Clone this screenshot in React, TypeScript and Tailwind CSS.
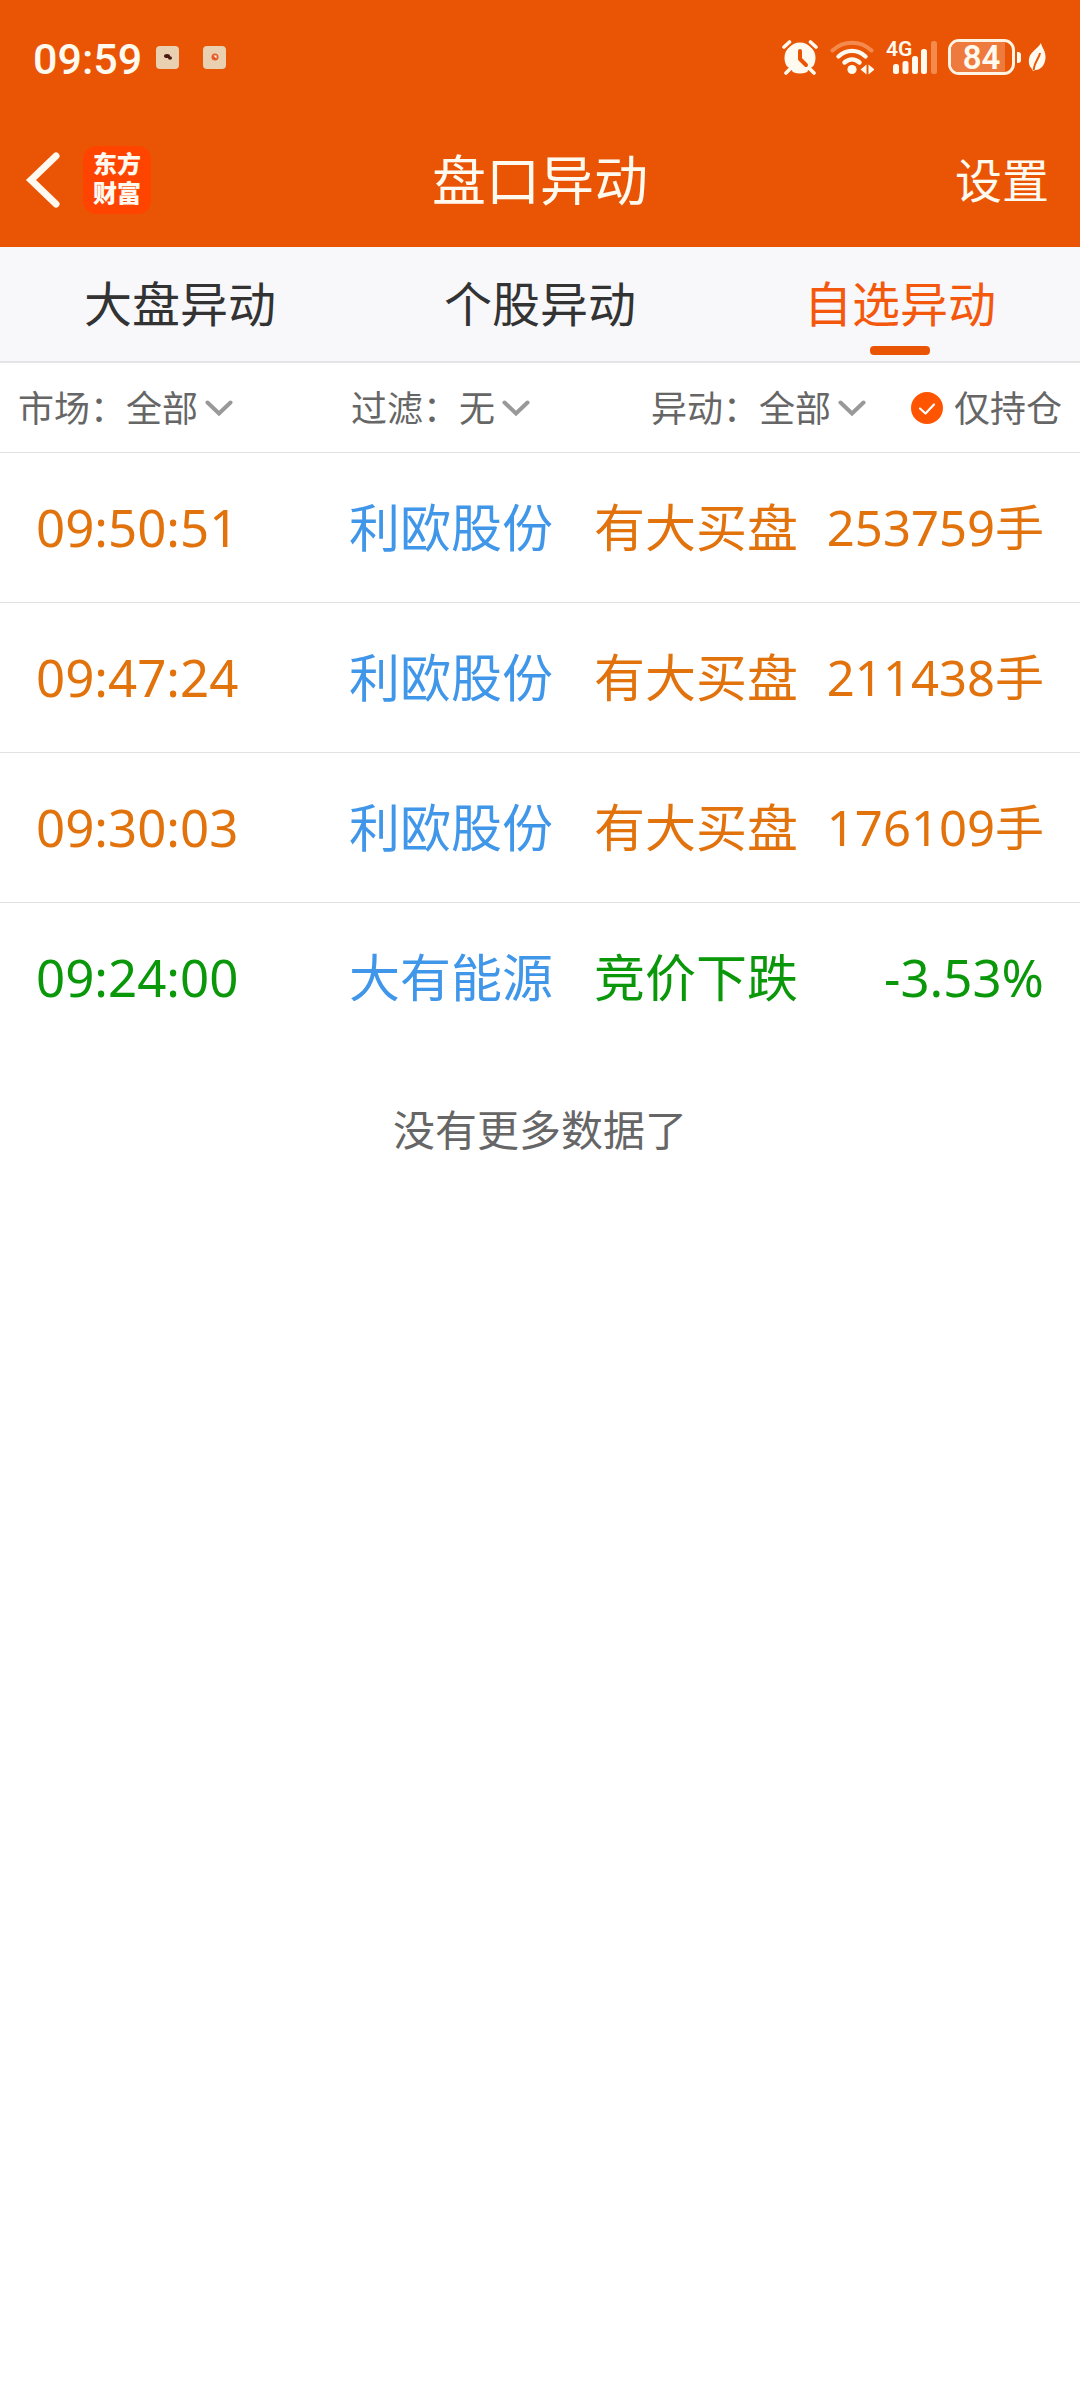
import React, { useState } from "react";

type Tone = "up" | "down";

interface Entry {
  time: string;
  stock: string;
  event: string;
  value: string;
  tone: Tone;
}

const entries: Entry[] = [
  { time: "09:50:51", stock: "利欧股份", event: "有大买盘", value: "253759手", tone: "up" },
  { time: "09:47:24", stock: "利欧股份", event: "有大买盘", value: "211438手", tone: "up" },
  { time: "09:30:03", stock: "利欧股份", event: "有大买盘", value: "176109手", tone: "up" },
  { time: "09:24:00", stock: "大有能源", event: "竞价下跌", value: "-3.53%", tone: "down" },
];

const tabs = ["大盘异动", "个股异动", "自选异动"];

function AlarmIcon() {
  return (
    <svg className="h-9 w-9" viewBox="0 0 36 36" fill="none" aria-hidden="true">
      <circle cx="18" cy="19" r="15.5" fill="#fffaf0" />
      <path d="M2 8 8 3M34 8 28 3M7 31l-3 3M29 31l3 3" stroke="#e95504" strokeWidth="7" strokeLinecap="round" />
      <circle cx="18" cy="19.500" r="14.500" fill="#fffaf0" />
      <path d="M2 8 7.500 3M34 8 28.500 3M8 30l-4 4M28 30l4 4" stroke="#fffaf0" strokeWidth="3.600" strokeLinecap="round" />
      <path d="M18 12v8l6 6" stroke="#e95504" strokeWidth="4" strokeLinecap="round" strokeLinejoin="round" />
    </svg>
  );
}

function WifiIcon() {
  return (
    <svg className="h-9 w-11" viewBox="0 0 44 36" fill="none" aria-hidden="true">
      <path d="M2.5 11.5c11-10.5 28-10.5 39 0" stroke="#f58a4f" strokeWidth="4" strokeLinecap="round" />
      <path d="M8.5 17.500c8-7.500 19-7.500 27 0" stroke="#fffaf0" strokeWidth="4.400" strokeLinecap="round" />
      <path d="M14.500 23.500c4.500-4 10.500-4 15 0" stroke="#fffaf0" strokeWidth="4.400" strokeLinecap="round" />
      <circle cx="22" cy="30.500" r="4.600" fill="#fffaf0" />
      <path d="M36.500 25.500v10l-6-5zM38.500 25.500v10l6-5z" fill="#fffaf0" />
    </svg>
  );
}

function SignalIcon() {
  return (
    <div className="relative h-9 w-[51px]">
      <svg className="h-9 w-[51px]" viewBox="0 0 51 36" aria-hidden="true">
        <rect x="7" y="25" width="6" height="10" rx="2.500" fill="#fffaf0" />
        <rect x="16.500" y="22" width="6" height="13" rx="2.500" fill="#fffaf0" />
        <rect x="26" y="17" width="6" height="18" rx="2.500" fill="#fffaf0" />
        <rect x="35" y="10" width="6" height="25" rx="2.500" fill="#fffaf0" />
        <rect x="45" y="2" width="6" height="33" rx="2.500" fill="#f58a4f" />
      </svg>
      <span className="absolute left-0 top-0 font-[Roboto] text-[21px] leading-5 font-semibold text-[#fffaf0]">4G</span>
    </div>
  );
}

function Battery() {
  return (
    <div className="flex items-center gap-[2px]">
      <div className="relative flex h-9 w-[67px] items-center justify-center overflow-hidden rounded-[11px] border-3 border-[#fff3e4]">
        <div className="absolute inset-y-0 left-0 w-[54px] bg-[#ee7a3e]" />
        <span className="relative font-[Roboto] text-[33px] leading-[33px] font-semibold text-[#fffaf0]">84</span>
      </div>
      <div className="h-[11px] w-[4px] rounded-r-[3px] bg-[#fffaf0]" />
    </div>
  );
}

function LeafIcon() {
  return (
    <svg className="h-[30px] w-[18px]" viewBox="0 0 18 30" fill="none" aria-hidden="true">
      <path d="M13 1C13.500 5 18 9 17.500 16 17 23.500 12 28.500 7 28L5 29 3.500 26.500C1 24 .500 20.500 1 17 2 10 8.500 8 13 1Z" fill="#fffaf0" />
      <path d="M12 11C11.500 16 6.500 19 5.500 28" stroke="#e95504" strokeWidth="2" />
    </svg>
  );
}

function StatusBar() {
  return (
    <div className="flex h-[114px] items-center justify-between pl-[33px] pr-[34px]">
      <div className="flex items-center">
        <span className="w-[123px] pt-1 font-[Roboto] text-[43px] leading-[52px] font-medium text-[#fffaf0]">09:59</span>
        <span className="flex h-[23px] w-[23px] items-center justify-center rounded-[4px] bg-[#e8d0b0]">
          <svg className="h-3 w-3" viewBox="0 0 12 12" fill="#4a1a12" aria-hidden="true">
            <ellipse cx="5" cy="5" rx="3" ry="2" />
            <ellipse cx="8" cy="7" rx="2" ry="1.800" />
          </svg>
        </span>
        <span className="ml-6 flex h-[23px] w-[23px] items-center justify-center rounded-[4px] bg-[#e8d0b0]">
          <svg className="h-3 w-3" viewBox="0 0 12 12" aria-hidden="true">
            <circle cx="6" cy="6" r="3.500" fill="#e95a28" />
            <path d="M4.500 4.500h3v3z" fill="#fff" />
          </svg>
        </span>
      </div>
      <div className="flex items-center">
        <AlarmIcon />
        <div className="ml-3"><WifiIcon /></div>
        <div className="ml-3"><SignalIcon /></div>
        <div className="ml-[11px]"><Battery /></div>
        <div className="ml-[7px]"><LeafIcon /></div>
      </div>
    </div>
  );
}

function Header() {
  return (
    <header className="bg-[#e95504] text-[#fffaf0]">
      <StatusBar />
      <div className="grid h-[133px] grid-cols-[1fr_auto_1fr] items-center px-[25px]">
        <div className="flex items-center pb-[2px]">
          <button type="button" aria-label="返回">
            <svg className="h-[58px] w-9" viewBox="0 0 36 58" fill="none" aria-hidden="true">
              <path d="M31 5 6 29l25 24" stroke="#fffaf0" strokeWidth="7" strokeLinecap="round" />
            </svg>
          </button>
          <div className="ml-[22px] flex h-[68px] w-[68px] justify-center rounded-[13px] bg-[#ff4400] pt-[2px]">
            <span className="w-12 text-[24px] leading-[29px] font-black">东方财富</span>
          </div>
        </div>
        <h1 className="pb-[6px] text-[54px] leading-[72px]">盘口异动</h1>
        <button type="button" className="mr-[6px] justify-self-end pb-[6px] text-[47px] leading-[64px]">设置</button>
      </div>
    </header>
  );
}

function Tabs() {
  const [active, setActive] = useState(2);
  return (
    <nav className="grid h-[116px] grid-cols-3 border-b-2 border-[#e4e4e6] bg-[#f8f8fb]" role="tablist">
      {tabs.map((tab, i) => (
        <button
          key={tab}
          type="button"
          role="tab"
          aria-selected={i === active}
          onClick={() => setActive(i)}
          className={
            i === active
              ? "relative pb-[6px] text-[48px] leading-[64px] text-[#f4580c]"
              : "relative pb-[6px] text-[48px] leading-[64px] text-[#333333]"
          }
        >
          {tab}
          {i === active && (
            <span className="absolute bottom-[6px] left-1/2 h-[9px] w-[60px] -translate-x-1/2 rounded-[4px] bg-[#e95504]" />
          )}
        </button>
      ))}
    </nav>
  );
}

function FilterSelect({ id, label, options }: { id: string; label: string; options: string[] }) {
  return (
    <div className="flex items-center">
      <label htmlFor={id} className="pb-1">{label}：</label>
      <div className="relative">
        <select id={id} className="block appearance-none bg-transparent pr-[34px] pb-1 outline-none">
          {options.map((o) => (
            <option key={o}>{o}</option>
          ))}
        </select>
        <svg className="pointer-events-none absolute right-0 top-1/2 h-4 w-7 -translate-y-1/2" viewBox="0 0 28 16" fill="none" aria-hidden="true">
          <path d="M2.500 2.500 14 13.500 25.500 2.500" stroke="#999999" strokeWidth="4" strokeLinecap="round" />
        </svg>
      </div>
    </div>
  );
}

function Filters() {
  return (
    <form className="grid h-[90px] grid-cols-[333fr_300fr_260fr_auto] items-center border-b border-[#e2e2e2] bg-white px-[18px] text-[36px] leading-[52px] text-[#666666]">
      <FilterSelect id="market" label="市场" options={["全部"]} />
      <FilterSelect id="filter" label="过滤" options={["无"]} />
      <FilterSelect id="change" label="异动" options={["全部"]} />
      <label className="flex items-center gap-[11px]">
        <span className="relative h-8 w-8">
          <input type="checkbox" defaultChecked className="peer block h-8 w-8 appearance-none rounded-full border-2 border-[#ff5500] checked:bg-[#ff5500]" />
          <svg className="pointer-events-none absolute inset-0 hidden h-8 w-8 peer-checked:block" viewBox="0 0 32 32" fill="none" aria-hidden="true">
            <path d="M9 16.500 14.500 21.500 23 12.500" stroke="#fff" strokeWidth="2.200" strokeLinecap="round" strokeLinejoin="round" />
          </svg>
        </span>
        <span className="pb-1">仅持仓</span>
      </label>
    </form>
  );
}

function EntryTable() {
  return (
    <table className="w-full table-fixed border-separate border-spacing-0 text-[51px] leading-[74px]">
      <colgroup>
        <col />
        <col className="w-[245px]" />
        <col className="w-[230px]" />
        <col className="w-[256px]" />
      </colgroup>
      <tbody>
        {entries.map((e) => (
          <tr
            key={e.time}
            className={
              e.tone === "up"
                ? "h-[150px] whitespace-nowrap text-[#e2720c] *:border-b *:border-[#e2e2e2]"
                : "h-[150px] whitespace-nowrap text-[#0a980a] *:border-b *:border-transparent"
            }
          >
            <td className="pb-[2px] pl-9 font-['Noto_Sans','Noto_Sans_CJK_SC',sans-serif]">{e.time}</td>
            <td className="pb-[6px] text-[#4096e8]">{e.stock}</td>
            <td className="pb-[6px]">{e.event}</td>
            <td
              className={
                e.value.endsWith("手")
                  ? "pr-9 pb-[2px] text-right font-['Noto_Sans','Noto_Sans_CJK_SC',sans-serif] text-[49px]"
                  : "pr-9 pb-[2px] text-right font-['Noto_Sans','Noto_Sans_CJK_SC',sans-serif]"
              }
            >
              {e.value}
            </td>
          </tr>
        ))}
      </tbody>
    </table>
  );
}

export default function App() {
  return (
    <div className="min-h-screen bg-white font-['Noto_Sans_CJK_SC',sans-serif]" lang="zh-CN">
      <Header />
      <Tabs />
      <main>
        <Filters />
        <EntryTable />
        <p className="pt-[45px] text-center text-[42px] leading-[60px] text-[#666666]">没有更多数据了</p>
      </main>
    </div>
  );
}
